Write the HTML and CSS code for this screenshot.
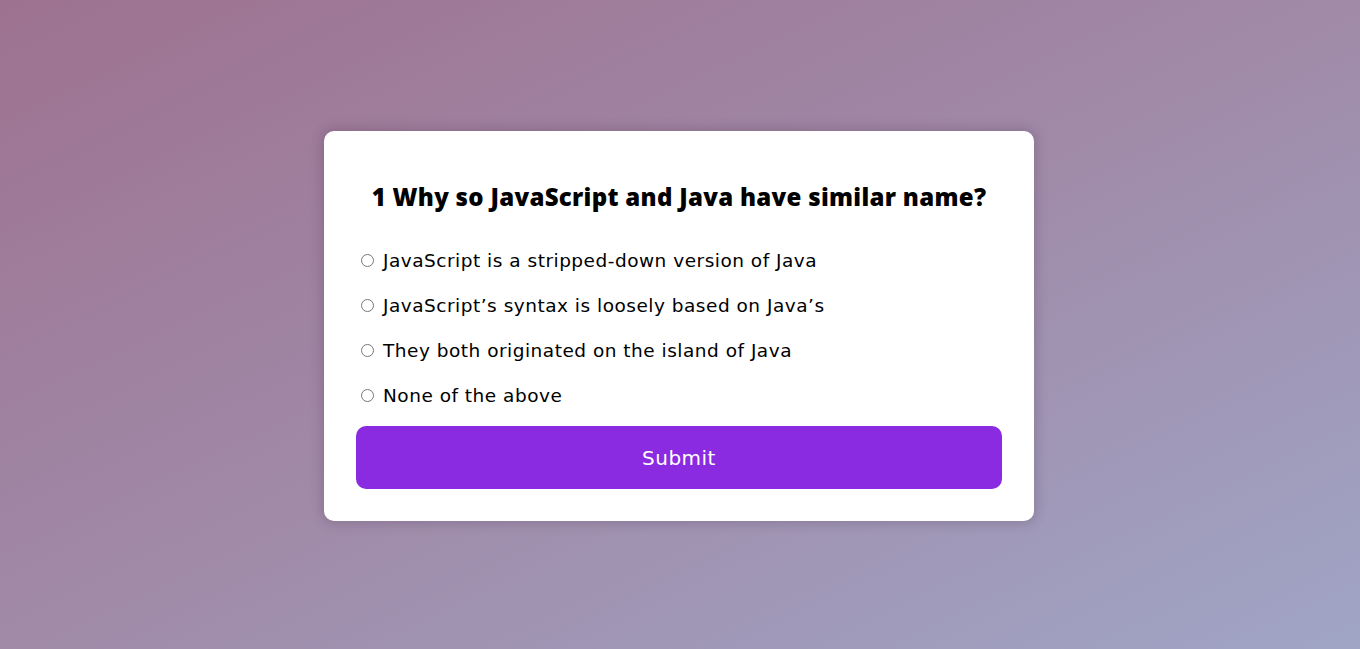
FILE: index.html
```html
<!DOCTYPE html>
<html lang="en">
<head>
<meta charset="utf-8">
<title>Quiz</title>
<link rel="stylesheet" href="styles.css">
</head>
<body>
<main class="page">
  <section class="quiz-card">
    <h2 class="question">1 Why so JavaScript and Java have similar name?</h2>
    <ul class="answers">
      <li class="answer"><label class="answer-label"><input type="radio" name="answer" class="answer-radio">JavaScript is a stripped-down version of Java</label></li>
      <li class="answer"><label class="answer-label"><input type="radio" name="answer" class="answer-radio">JavaScript’s syntax is loosely based on Java’s</label></li>
      <li class="answer"><label class="answer-label"><input type="radio" name="answer" class="answer-radio">They both originated on the island of Java</label></li>
      <li class="answer"><label class="answer-label"><input type="radio" name="answer" class="answer-radio">None of the above</label></li>
    </ul>
    <button class="submit-btn" type="button">Submit</button>
  </section>
</main>
</body>
</html>
```

FILE: styles.css
```css
* { box-sizing: border-box; }

html, body {
  margin: 0;
  padding: 0;
  height: 100%;
}

body {
  font-family: "DejaVu Sans", "Open Sans", sans-serif;
  background: linear-gradient(to bottom right, #9d7290 0%, #a08aa8 50%, #a0a5c6 100%);
  color: #000;
}

.page {
  height: 100vh;
  display: flex;
  align-items: center;
  justify-content: center;
  padding-top: 3px;
  padding-right: 2px;
}

.quiz-card {
  width: 710px;
  background: #fff;
  border-radius: 10px;
  box-shadow: 0 0 12px 2px rgba(60, 30, 60, 0.22);
  padding: 32px;
}

.question {
  margin: 16px 0 0;
  font-family: "Open Sans", "DejaVu Sans", sans-serif;
  font-size: 24px;
  line-height: 36px;
  font-weight: 800;
  letter-spacing: 0.3px;
  text-align: center;
}

.answers {
  list-style: none;
  margin: 32px 0 0;
  padding: 0;
  display: flex;
  flex-direction: column;
  gap: 18px;
}

.answer-label {
  display: flex;
  align-items: center;
  font-size: 18.5px;
  line-height: 27px;
  letter-spacing: 0.5px;
  cursor: pointer;
}

.answer-radio {
  width: 13px;
  height: 13px;
  margin: 0 9px 0 5px;
}

.submit-btn {
  display: block;
  width: 100%;
  height: 63px;
  margin-top: 17px;
  border: none;
  border-radius: 10px;
  background: #8a2be2;
  color: #fff;
  font-family: inherit;
  font-size: 20px;
  letter-spacing: 0.5px;
  cursor: pointer;
}
```
